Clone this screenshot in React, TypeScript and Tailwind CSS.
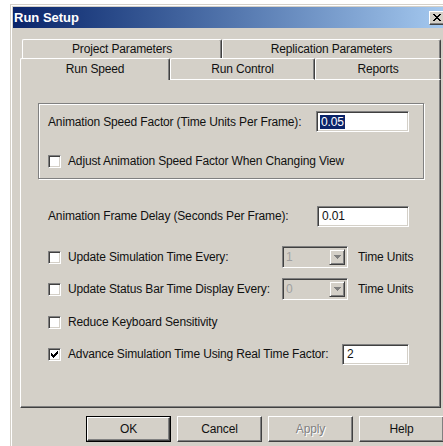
import React from "react";

const FONT = { fontFamily: '"Liberation Sans", Arial, sans-serif' };

function Sunken({ className = "", inner = "bg-white", children }: { className?: string; inner?: string; children?: React.ReactNode }) {
  return (
    <div className={`border border-t-[#808080] border-l-[#808080] border-b-white border-r-white ${className}`}>
      <div className={`h-full w-full shadow-[inset_1px_1px_0_#404040,inset_-1px_-1px_0_#d4d0c8] ${inner}`}>{children}</div>
    </div>
  );
}

function CheckMark() {
  return (
    <svg width="7" height="7" viewBox="0 0 7 7" shapeRendering="crispEdges">
      <path
        d="M6 0h1v1h-1z M5 1h2v1h-2z M0 2h1v1H0z M4 2h3v1h-3z M0 3h2v1H0z M3 3h3v1h-3z M0 4h5v1H0z M1 5h3v1H1z M2 6h1v1H2z"
        fill="#000"
      />
    </svg>
  );
}

function CheckBox({ checked = false }: { checked?: boolean }) {
  return (
    <Sunken className="w-[13px] h-[13px] shrink-0" inner="bg-white flex items-center justify-center">
      {checked && <CheckMark />}
    </Sunken>
  );
}

function TextBox({ value, width, selected = false }: { value: string; width: string; selected?: boolean }) {
  return (
    <Sunken className={`${width} h-[21px] shrink-0`} inner="bg-white flex items-center pl-[3px]">
      {selected ? (
        <span className="bg-[#0a246a] text-white leading-[14px] px-[1px]">{value}</span>
      ) : (
        <span className="leading-[14px] px-[1px]">{value}</span>
      )}
    </Sunken>
  );
}

function Combo({ value }: { value: string }) {
  return (
    <Sunken className="w-[66px] h-[22px] shrink-0" inner="bg-[#d4d0c8] flex items-center justify-between pl-[3px] pr-[2px]">
      <span className="text-[#a0a0a0] leading-[14px]">{value}</span>
      <div className="w-[16px] h-[16px] border border-t-[#d4d0c8] border-l-[#d4d0c8] border-b-[#404040] border-r-[#404040] shadow-[inset_1px_1px_0_#fff,inset_-1px_-1px_0_#808080] flex items-center justify-center">
        <svg width="7" height="4" viewBox="0 0 7 4" shapeRendering="crispEdges">
          <path d="M0 0h7v1H0z M1 1h5v1H1z M2 2h3v1H2z M3 3h1v1H3z" fill="#808080" />
        </svg>
      </div>
    </Sunken>
  );
}

function Tab({ label, className = "" }: { label: string; className?: string }) {
  return (
    <div
      className={`flex items-center justify-center border-l border-t border-r border-l-white border-t-white border-r-[#404040] rounded-tl-[2px] rounded-tr-[2px] shadow-[inset_-1px_0_0_#808080] ${className}`}
    >
      {label}
    </div>
  );
}

function Button({ label, isDefault = false, disabled = false }: { label: string; isDefault?: boolean; disabled?: boolean }) {
  const face = (
    <div className="h-full w-full border border-t-white border-l-white border-b-[#404040] border-r-[#404040] shadow-[inset_-1px_-1px_0_#808080] flex items-center justify-center">
      {disabled ? (
        <span className="text-[#808080] [text-shadow:1px_1px_0_#fff]">{label}</span>
      ) : (
        <span>{label}</span>
      )}
    </div>
  );
  return isDefault ? (
    <div className="w-[85px] h-[26px] border border-black">{face}</div>
  ) : (
    <div className="w-[85px] h-[26px]">{face}</div>
  );
}

export default function App() {
  return (
    <div className="w-[443px] h-[446px] overflow-hidden bg-white text-[#111] text-[12px] tracking-[-0.15px]" style={FONT}>
      <div className="ml-[10px] mt-[4px] w-[440px] h-[460px] bg-[#d4d0c8] p-[3px] shadow-[inset_1px_1px_0_#d4d0c8,inset_2px_2px_0_#fff]">
        {/* caption bar */}
        <div className="h-[21px] flex items-center bg-linear-to-r from-[#0a246a] to-[#a6caf0]">
          <span className="pl-[1px] text-white font-bold text-[13px] tracking-normal">Run Setup</span>
          <div className="ml-auto mr-[2px] w-[16px] h-[14px] bg-[#d4d0c8] border border-t-white border-l-white border-b-[#404040] border-r-[#404040] shadow-[inset_-1px_-1px_0_#808080] flex items-center justify-center">
            <svg width="8" height="7" viewBox="0 0 8 7" shapeRendering="crispEdges">
              <path d="M0 0h2v1H0z M6 0h2v1H6z M1 1h2v1H1z M5 1h2v1H5z M2 2h4v1H2z M3 3h2v1H3z M2 4h4v1H2z M1 5h2v1H1z M5 5h2v1H5z M0 6h2v1H0z M6 6h2v1H6z" fill="#000" />
            </svg>
          </div>
        </div>

        {/* property sheet */}
        <div className="mt-[11px] pl-[7px]">
          <div className="flex h-[19px] pl-[2px]">
            <Tab label="Project Parameters" className="w-[200px]" />
            <Tab label="Replication Parameters" className="w-[219px]" />
          </div>
          <div className="flex h-[22px]">
            <Tab label="Run Speed" className="w-[150px] pb-[1px]" />
            <Tab label="Run Control" className="w-[145px] border-b border-b-white" />
            <Tab label="Reports" className="w-[126px] border-b border-b-white" />
          </div>

          <div className="w-[421px] h-[328px] border-l border-r border-b border-l-white border-r-[#404040] border-b-[#404040] shadow-[inset_-1px_-1px_0_#808080] pl-[17px] pt-[23px]">
            {/* animation speed group */}
            <div className="w-[386px] h-[76px] border border-[#808080] shadow-[inset_1px_1px_0_#fff,1px_1px_0_#fff] pl-[9px]">
              <div className="mt-[7px] h-[21px] flex items-center">
                <span className="w-[268px] shrink-0">Animation Speed Factor (Time Units Per Frame):</span>
                <TextBox value="0.05" width="w-[93px]" selected />
              </div>
              <div className="mt-[18px] h-[22px] flex items-center">
                <CheckBox />
                <span className="ml-[7px]">Adjust Animation Speed Factor When Changing View</span>
              </div>
            </div>

            <div className="pl-[10px]">
              <div className="mt-[26px] h-[22px] flex items-center">
                <span className="w-[269px] shrink-0">Animation Frame Delay (Seconds Per Frame):</span>
                <TextBox value="0.01" width="w-[92px]" />
              </div>

              <div className="mt-[19px] h-[22px] flex items-center">
                <div className="w-[234px] shrink-0 flex items-center">
                  <CheckBox />
                  <span className="ml-[7px]">Update Simulation Time Every:</span>
                </div>
                <Combo value="1" />
                <span className="ml-[10px]">Time Units</span>
              </div>

              <div className="mt-[10px] h-[22px] flex items-center">
                <div className="w-[234px] shrink-0 flex items-center">
                  <CheckBox />
                  <span className="ml-[7px]">Update Status Bar Time Display Every:</span>
                </div>
                <Combo value="0" />
                <span className="ml-[10px]">Time Units</span>
              </div>

              <div className="mt-[11px] h-[22px] flex items-center">
                <CheckBox />
                <span className="ml-[7px]">Reduce Keyboard Sensitivity</span>
              </div>

              <div className="mt-[10px] h-[22px] flex items-center">
                <div className="w-[294px] shrink-0 flex items-center">
                  <CheckBox checked />
                  <span className="ml-[7px]">Advance Simulation Time Using Real Time Factor:</span>
                </div>
                <TextBox value="2" width="w-[67px]" />
              </div>
            </div>
          </div>
        </div>

        {/* dialog buttons */}
        <div className="mt-[8px] pl-[73px] flex gap-[6px]">
          <Button label="OK" isDefault />
          <Button label="Cancel" />
          <Button label="Apply" disabled />
          <Button label="Help" />
        </div>
      </div>
    </div>
  );
}
